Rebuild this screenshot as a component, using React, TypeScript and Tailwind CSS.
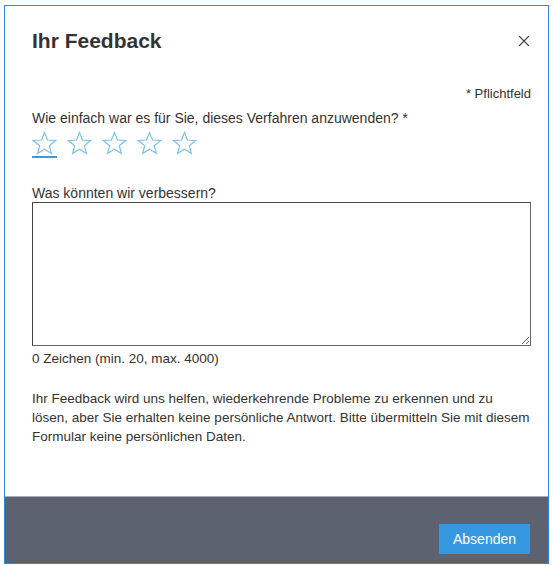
import { X } from "lucide-react";

const Star = () => (
  <svg width="25" height="24" viewBox="0 0 26 25" fill="none">
    <path
      d="M13 1.5 L16.1 9.4 L24.6 9.9 L18 15.3 L20.2 23.5 L13 18.9 L5.8 23.5 L8 15.3 L1.4 9.9 L9.9 9.4 Z"
      stroke="#7cbff0"
      strokeWidth="1.2"
    />
  </svg>
);

const App = () => {
  return (
    <div className="w-[553px] h-[566px] bg-white pt-[5px] pl-[4px] font-['Liberation_Sans',Arial,sans-serif] text-[#333]">
      <div className="w-[545px] h-[559px] border border-[#2a8ae0] flex flex-col bg-white">
        <div className="flex-1 pl-[27px] pr-[16px]">
          <div className="flex items-center justify-between pt-[23px]">
            <h1 className="text-[21px] leading-[24px] font-bold text-[#333]">Ihr Feedback</h1>
            <X size={18} strokeWidth={1.5} className="text-[#444] -mr-[1px]" />
          </div>
          <p className="text-right text-[13px] leading-[14px] mt-[34px] pr-[1px]">* Pflichtfeld</p>
          <p className="text-[14px] leading-[16px] mt-[9px]">
            Wie einfach war es für Sie, dieses Verfahren anzuwenden? *
          </p>
          <div className="flex gap-[10px] mt-[5px]">
            {[0, 1, 2, 3, 4].map((i) => (
              <div
                key={i}
                className={`pb-[1px] ${i === 0 ? "border-b-2 border-[#3a9ae0]" : "border-b-2 border-transparent"}`}
              >
                <Star />
              </div>
            ))}
          </div>
          <p className="text-[14px] leading-[16px] mt-[27px]">Was könnten wir verbessern?</p>
          <textarea className="block w-[499px] h-[144px] mt-[1px] border border-[#666] border-t-[#444] border-l-[#444] bg-white resize-y outline-none" />
          <p className="text-[13.5px] leading-[15px] mt-[5px]">0 Zeichen (min. 20, max. 4000)</p>
          <p className="text-[13.5px] leading-[19px] mt-[23px]">
            Ihr Feedback wird uns helfen, wiederkehrende Probleme zu erkennen und zu
            <br />
            lösen, aber Sie erhalten keine persönliche Antwort. Bitte übermitteln Sie mit diesem
            <br />
            Formular keine persönlichen Daten.
          </p>
        </div>
        <div className="h-[67px] bg-[#5c6270] border-t border-[#a9adb5] flex items-end justify-end pr-[18px] pb-[9px]">
          <button className="h-[30px] w-[91px] bg-[#3598e0] text-white text-[14px]">Absenden</button>
        </div>
      </div>
    </div>
  );
};

export default App;
